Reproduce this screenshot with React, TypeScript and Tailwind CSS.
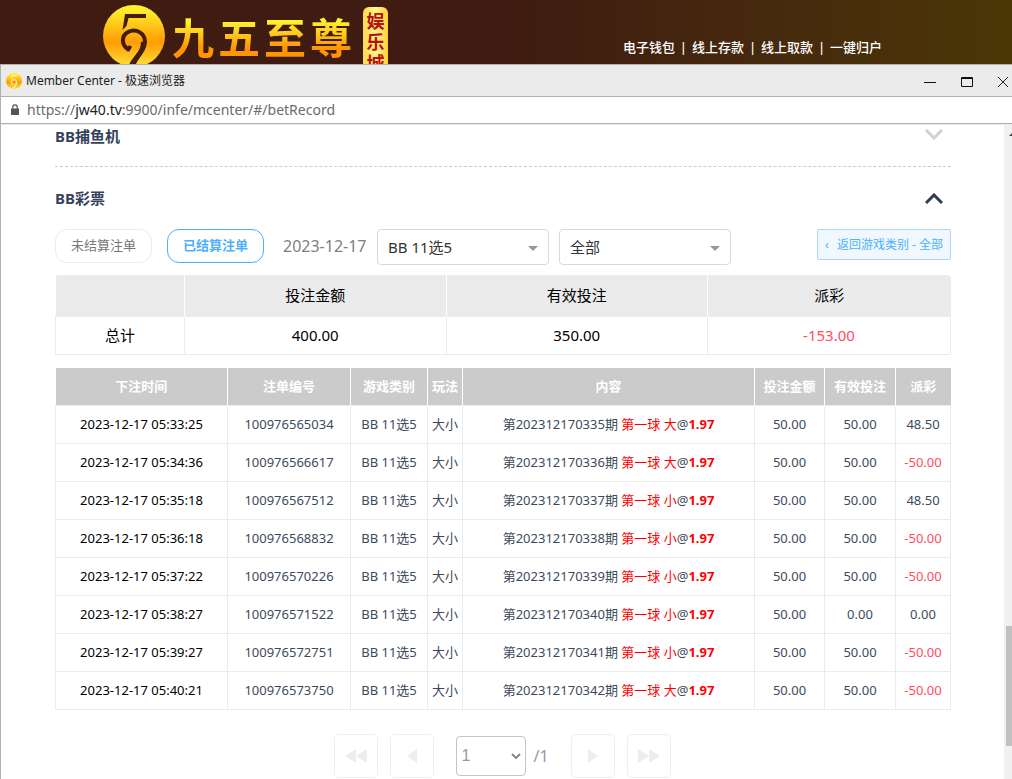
import { useState } from "react";
import { clsx } from "clsx";

interface Bet {
  time: string;
  id: string;
  issue: string;
  pick: string;
  amount: string;
  valid: string;
  payout: string;
}

const bets: Bet[] = [
  { time: "2023-12-17 05:33:25", id: "100976565034", issue: "202312170335", pick: "大", amount: "50.00", valid: "50.00", payout: "48.50" },
  { time: "2023-12-17 05:34:36", id: "100976566617", issue: "202312170336", pick: "大", amount: "50.00", valid: "50.00", payout: "-50.00" },
  { time: "2023-12-17 05:35:18", id: "100976567512", issue: "202312170337", pick: "小", amount: "50.00", valid: "50.00", payout: "48.50" },
  { time: "2023-12-17 05:36:18", id: "100976568832", issue: "202312170338", pick: "小", amount: "50.00", valid: "50.00", payout: "-50.00" },
  { time: "2023-12-17 05:37:22", id: "100976570226", issue: "202312170339", pick: "小", amount: "50.00", valid: "50.00", payout: "-50.00" },
  { time: "2023-12-17 05:38:27", id: "100976571522", issue: "202312170340", pick: "小", amount: "50.00", valid: "0.00", payout: "0.00" },
  { time: "2023-12-17 05:39:27", id: "100976572751", issue: "202312170341", pick: "小", amount: "50.00", valid: "50.00", payout: "-50.00" },
  { time: "2023-12-17 05:40:21", id: "100976573750", issue: "202312170342", pick: "大", amount: "50.00", valid: "50.00", payout: "-50.00" },
];

const navLinks = ["电子钱包", "线上存款", "线上取款", "一键归户"];

const Emblem = ({ className, id }: { className: string; id: string }) => {
  const ink = id === "logo" ? "#431d10" : "#fff3d0";

  return (
    <svg viewBox="0 0 62 62" className={className} aria-hidden="true">
      <defs>
        <linearGradient id={id} x1="0" y1="0" x2="0" y2="1">
          <stop offset="0.05" stopColor="#fff22c" />
          <stop offset="0.6" stopColor="#ff9c05" />
          <stop offset="1" stopColor="#ffe23a" />
        </linearGradient>
      </defs>
      <circle cx="31" cy="31" r="31" fill={`url(#${id})`} />
      <path d="M22 9H43V13H25.5L23.5 21L19.5 25Z" fill={ink} />
      <path d="M26 45C18 40 18 31 25 27C33 23 42 28 42 37" fill="none" stroke={ink} strokeWidth="4" />
      <path d="M44 36C44 46 36 52 32 61L26 60C29 52 38 47 38 37Z" fill={ink} />
      <path d="M26 47C22 43 25 38 29 42Z" fill={ink} />
    </svg>
  );
};

const Header = () => (
  <header className="flex h-16 justify-between overflow-hidden bg-linear-to-r from-[#3f1b11] from-50% to-[#4b3706] pl-[103px] pr-[130px]">
    <div className="flex items-start">
      <Emblem id="logo" className="mt-[5px] size-[62px] shrink-0" />
      <h1 className="ml-[7px] mt-3 flex gap-1 bg-linear-to-b from-[#fff22c] from-20% to-[#ff9503] to-75% bg-clip-text font-['Noto_Sans_CJK_SC',sans-serif] text-[42px] font-bold leading-[48px] text-transparent">
        {["九", "五", "至", "尊"].map((char) => (
          <span key={char}>{char}</span>
        ))}
      </h1>
      <div className="ml-[11px] mt-[7px] flex w-[25px] flex-col items-center rounded-md bg-linear-to-r from-[#ffd94a] via-[#fff58a] to-[#ffd02c] pt-[3px] font-['Noto_Sans_CJK_SC',sans-serif] text-[18px] font-bold leading-[21px] text-[#b80f0a]">
        {["娱", "乐", "城"].map((char) => (
          <span key={char}>{char}</span>
        ))}
      </div>
    </div>
    <nav className="mt-[38px] flex h-5 items-center text-[13px] font-medium text-white">
      {navLinks.map((label, i) => (
        <div key={label} className="flex">
          {i > 0 && <span className="w-[17px] text-center">|</span>}
          <a href="#">{label}</a>
        </div>
      ))}
    </nav>
  </header>
);

const TitleBar = () => (
  <div className="flex h-[33px] items-center border-y border-[#b0b0b0] bg-[#ebebeb] pl-[5px] pr-1">
    <Emblem id="favicon" className="size-4" />
    <span className="ml-1 flex-1 text-[12px] text-[#222]">Member Center - 极速浏览器</span>
    <div className="flex items-center gap-[25px]">
      <button aria-label="最小化">
        <svg width="12" height="12" className="block" stroke="#111">
          <path d="M0 7.5H12" />
        </svg>
      </button>
      <button aria-label="最大化">
        <svg width="12" height="12" className="block" fill="none" stroke="#111">
          <path d="M.5 2.5H11.5V11.5H.5ZM.5 3.5H11.5" />
        </svg>
      </button>
      <button aria-label="关闭">
        <svg width="10" height="12" className="block" stroke="#222">
          <path d="M0 2L10 12M10 2L0 12" />
        </svg>
      </button>
    </div>
  </div>
);

const AddressBar = () => (
  <div className="flex h-[27px] items-center border-b border-[#b0b0b0] pb-px pl-[10px] text-[14px] text-[#6b6b6b]">
    <svg width="8" height="11" viewBox="0 0 8 11" fill="#555" aria-hidden="true">
      <path d="M0 4.5H8V11H0Z" />
      <path d="M1.8 5V3a2.2 2.2 0 0 1 4.4 0V5" fill="none" stroke="#555" strokeWidth="1.2" />
    </svg>
    <span className="ml-2">
      https://<span className="text-[#222]">jw40.tv</span>:9900/infe/mcenter/#/betRecord
    </span>
  </div>
);

const Chevron = ({ open }: { open: boolean }) => (
  <svg width="18" height="11" viewBox="0 0 18 11" fill="none" strokeWidth="3" className="mr-2" aria-hidden="true">
    {open ? <path d="M1 10L9 2L17 10" stroke="#2c3e50" /> : <path d="M1 1L9 9L17 1" stroke="#d0d0d0" />}
  </svg>
);

interface FilterProps {
  label: string;
  options: string[];
}

const FilterSelect = ({ label, options }: FilterProps) => (
  <div className="relative w-[172px]">
    <select
      aria-label={label}
      className="block h-9 w-full appearance-none rounded-sm border border-[#d9d9d9] bg-white pl-[10px] text-[15px] text-[#333]"
    >
      {options.map((option) => (
        <option key={option}>{option}</option>
      ))}
    </select>
    <svg width="10" height="5" className="pointer-events-none absolute right-[11px] top-[17px]" fill="#999">
      <path d="M0 0H10L5 5Z" />
    </svg>
  </div>
);

const Filters = () => {
  const [settled, setSettled] = useState(true);

  return (
    <div className="flex items-start">
      <button
        onClick={() => setSettled(false)}
        className={clsx(
          "h-[34px] w-[97px] rounded-xl border text-[13px]",
          settled ? "border-[#ebebeb] text-[#777]" : "border-[#4eaffc] font-bold text-[#4eaffc]"
        )}
      >
        未结算注单
      </button>
      <button
        onClick={() => setSettled(true)}
        className={clsx(
          "ml-[15px] h-[34px] w-[97px] rounded-xl border text-[13px]",
          settled ? "border-[#4eaffc] font-bold text-[#4eaffc]" : "border-[#ebebeb] text-[#777]"
        )}
      >
        已结算注单
      </button>
      <span className="ml-[19px] w-[94px] text-[16px] leading-[34px] text-[#808080]">2023-12-17</span>
      <div className="flex gap-[10px]">
        <FilterSelect label="游戏" options={["BB 11选5"]} />
        <FilterSelect label="玩法" options={["全部"]} />
      </div>
      <button className="ml-auto flex h-[31px] w-[134px] items-center justify-between rounded-xs border border-[#acd6ff] bg-[#f0f7ff] px-[7px] text-[12px] text-[#4db2fa]">
        <span>‹</span>
        <span>返回游戏类别 - 全部</span>
      </button>
    </div>
  );
};

const Summary = () => (
  <div className="mt-[10px] overflow-hidden rounded-t-sm">
    <table className="w-full table-fixed border-collapse text-center text-[15px] text-black">
      <colgroup>
        <col className="w-[129px]" />
        <col />
        <col />
        <col className="w-[243px]" />
      </colgroup>
      <thead>
        <tr className="h-[41px] bg-[#ebebeb]">
          <td className="border-r border-white" />
          <th className="border-r border-white font-normal">投注金额</th>
          <th className="border-r border-white font-normal">有效投注</th>
          <th className="font-normal">派彩</th>
        </tr>
      </thead>
      <tbody>
        <tr className="h-[38px]">
          <th className="border border-[#ebebeb] font-normal">总计</th>
          <td className="border border-[#ebebeb]">400.00</td>
          <td className="border border-[#ebebeb]">350.00</td>
          <td className="border border-[#ebebeb] text-[#ff4c5e]">-153.00</td>
        </tr>
      </tbody>
    </table>
  </div>
);

const BetTable = () => (
  <table className="mt-[13px] w-full table-fixed border-collapse text-center text-[13px] text-[#3d4a5c]">
    <colgroup>
      <col className="w-[172px]" />
      <col className="w-[123px]" />
      <col className="w-[77px]" />
      <col className="w-[35px]" />
      <col />
      <col className="w-[70px]" />
      <col className="w-[71px]" />
      <col className="w-[55px]" />
    </colgroup>
    <thead>
      <tr className="h-[38px] bg-[#cbcbcb] text-white">
        {["下注时间", "注单编号", "游戏类别", "玩法", "内容", "投注金额", "有效投注", "派彩"].map((title) => (
          <th key={title} className="border-r border-white p-0 last:border-r-0">
            {title}
          </th>
        ))}
      </tr>
    </thead>
    <tbody>
      {bets.map((bet) => (
        <tr key={bet.id} className="h-[38px]">
          <td className="border border-[#ebebeb] p-0 text-black">{bet.time}</td>
          <td className="border border-[#ebebeb] p-0">{bet.id}</td>
          <td className="border border-[#ebebeb] p-0">BB 11选5</td>
          <td className="border border-[#ebebeb] p-0">大小</td>
          <td className="border border-[#ebebeb] p-0">
            第{bet.issue}期 <span className="text-[#ff0000]">第一球 {bet.pick}</span>@
            <b className="text-[#ff0000]">1.97</b>
          </td>
          <td className="border border-[#ebebeb] p-0">{bet.amount}</td>
          <td className="border border-[#ebebeb] p-0">{bet.valid}</td>
          <td className={clsx("border border-[#ebebeb] p-0", bet.payout.startsWith("-") && "text-[#ff4c5e]")}>
            {bet.payout}
          </td>
        </tr>
      ))}
    </tbody>
  </table>
);

interface PageButtonProps {
  label: string;
  path: string;
  width: number;
}

const PageButton = ({ label, path, width }: PageButtonProps) => (
  <button aria-label={label} className="flex size-11 items-center justify-center rounded-sm border border-[#efefef]">
    <svg width={width} height="14" fill="#ededed">
      <path d={path} />
    </svg>
  </button>
);

const Pagination = () => (
  <div className="mt-6 flex items-center justify-center pb-px pr-[2px] text-[#999]">
    <div className="flex gap-3">
      <PageButton label="第一页" width={22} path="M11 0V14L0 7ZM22 0V14L11 7Z" />
      <PageButton label="上一页" width={10} path="M10 0V14L0 7Z" />
    </div>
    <div className="relative ml-[22px] w-[70px]">
      <select
        aria-label="页码"
        className="block h-10 w-full appearance-none rounded-sm border border-[#c4c4c4] bg-white pl-[5px] font-['Liberation_Sans',sans-serif] text-[16px]"
      >
        <option>1</option>
      </select>
      <svg
        width="10"
        height="6"
        fill="none"
        stroke="#888"
        strokeWidth="2"
        className="pointer-events-none absolute right-[5px] top-[17px]"
      >
        <path d="M1 1L5 5L9 1" />
      </svg>
    </div>
    <span className="ml-2 w-[37px] text-[16px]">/1</span>
    <div className="flex gap-3">
      <PageButton label="下一页" width={10} path="M0 0V14L10 7Z" />
      <PageButton label="最后一页" width={22} path="M0 0V14L11 7ZM11 0V14L22 7Z" />
    </div>
  </div>
);

const Scrollbar = () => (
  <div className="flex w-2 shrink-0 flex-col items-end bg-[#f0f0f0]" aria-hidden="true">
    <svg width="3" height="3" className="mt-2" fill="#444">
      <path d="M0 3L3 0V3Z" />
    </svg>
    <div className="mb-[33px] mt-auto h-[120px] w-[6px] bg-[#c1c1c1]" />
  </div>
);

const App = () => {
  return (
    <div className="flex min-h-screen flex-col bg-white font-['Noto_Sans','Noto_Sans_CJK_SC',sans-serif]">
      <Header />
      <div className="flex flex-1 flex-col border-l border-[#b0b0b0]">
        <TitleBar />
        <AddressBar />
        <div className="flex flex-1 border-t border-[#ebebeb]">
          <main className="min-w-0 flex-1 pl-[54px] pr-[53px]">
            <button className="flex h-[42px] w-full items-start justify-between border-b border-dashed border-[#ccc] text-[15px] font-bold text-[#34435a]">
              <span className="leading-[22px]">BB捕鱼机</span>
              <span className="pt-1">
                <Chevron open={false} />
              </span>
            </button>
            <button className="flex h-[62px] w-full items-center justify-between text-[15px] font-bold text-[#34435a]">
              BB彩票
              <Chevron open />
            </button>
            <Filters />
            <Summary />
            <BetTable />
            <Pagination />
          </main>
          <Scrollbar />
        </div>
      </div>
    </div>
  );
};

export default App;
